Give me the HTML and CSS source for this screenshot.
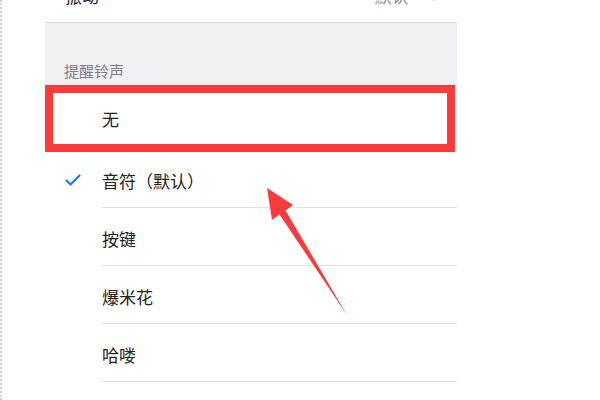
FILE: index.html
```html
<!DOCTYPE html>
<html lang="zh-CN">
<head>
    <meta charset="UTF-8">
    <title>提醒铃声</title>
    <link rel="stylesheet" href="styles.css">
</head>
<body>
    <div class="frame">
        <div class="panel">
            <div class="row-top">
                <span class="top-label">振动</span>
                <span class="top-value">默认 <span class="chev">&gt;</span></span>
            </div>

            <div class="section-head">提醒铃声</div>

            <div class="item first">
                <div class="mark"></div>
                <div class="label">无</div>
                <div class="highlight"></div>
            </div>
            <div class="item">
                <div class="mark">
                    <svg width="16" height="12" viewBox="0 0 16 12">
                        <path d="M1.5 6.5 L5.5 10.5 L14.5 1.5" fill="none" stroke="#1a7cf2" stroke-width="2.2" stroke-linecap="round" stroke-linejoin="round"/>
                    </svg>
                </div>
                <div class="label">音符（默认）</div>
            </div>
            <div class="item">
                <div class="mark"></div>
                <div class="label">按键</div>
            </div>
            <div class="item">
                <div class="mark"></div>
                <div class="label">爆米花</div>
            </div>
            <div class="item">
                <div class="mark"></div>
                <div class="label">哈喽</div>
            </div>
        </div>

        <!-- 标注箭头 -->
        <svg class="arrow" width="600" height="400" viewBox="0 0 600 400">
            <polygon points="267,188 293,205 285.5,210.5 347,315 279.5,214.5 272,220" fill="#fb3a3c"/>
        </svg>
    </div>
</body>
</html>
```

FILE: styles.css
```css
html, body {
    margin: 0;
    padding: 0;
    background: #fff;
}
body {
    font-family: "Noto Sans CJK SC", "Noto Sans", sans-serif;
    color: #222;
}
.frame {
    position: relative;
    height: 400px;
    overflow: hidden;
    border-left: 2px dotted #cfcfcf;
}
.panel {
    width: 412px;
    margin-left: 43px;
    margin-top: -35px;
}
.row-top {
    height: 58px;
    display: flex;
    align-items: center;
    justify-content: space-between;
    border-bottom: 1px solid #d9d9de;
    box-sizing: border-box;
    padding: 4px 17px 0 20px;
    font-size: 17px;
}
.top-value {
    color: #8e8e93;
}
.chev {
    margin-left: 20px;
    font-size: 14px;
    color: #c4c4c8;
}
.section-head {
    height: 62px;
    background: #efeff4;
    box-sizing: border-box;
    padding: 38px 0 0 19px;
    font-size: 15px;
    line-height: 20px;
    color: #808085;
}
.item {
    position: relative;
    display: flex;
    height: 58px;
}
.item.first {
    height: 65px;
}
.mark {
    width: 56px;
    display: flex;
    align-items: center;
    justify-content: center;
    padding-top: 2px;
    box-sizing: border-box;
}
.label {
    flex: 1;
    display: flex;
    align-items: center;
    padding-left: 1px;
    padding-top: 3px;
    font-size: 17px;
    border-bottom: 1px solid #e2e2e4;
}
.highlight {
    position: absolute;
    top: 0;
    left: 0;
    right: 2px;
    bottom: -2px;
    border: 8.5px solid #fb3a3c;
}
.arrow {
    position: absolute;
    left: -2px;
    top: 0;
    pointer-events: none;
}
```
